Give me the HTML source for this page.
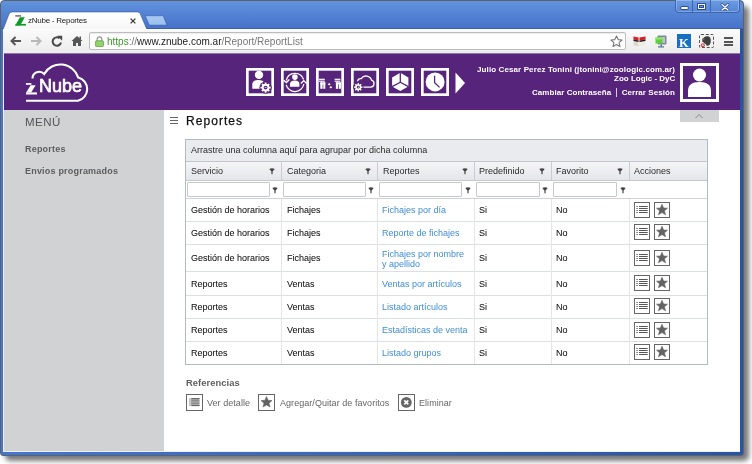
<!DOCTYPE html>
<html><head><meta charset="utf-8">
<style>
*{margin:0;padding:0;box-sizing:border-box}
html,body{width:752px;height:464px;overflow:hidden;background:#fff;font-family:"Liberation Sans",sans-serif;position:relative}
.a{position:absolute}
.t{position:absolute;white-space:nowrap;line-height:1;will-change:transform}
#shadow{left:5px;top:6px;width:744px;height:455px;background:rgba(0,0,0,.52);filter:blur(2.6px);border-radius:5px}
#win{left:0;top:0;width:744px;height:456px;background:linear-gradient(90deg,#4376d0,#3366c0 50%,#2654a9);border:1px solid #5f6168;border-radius:4px 4px 3px 3px}
#title{left:1px;top:1px;width:742px;height:28px;background:linear-gradient(#6193de,#4772c8);border-bottom:1px solid #3b62b2;border-radius:4px 4px 0 0}
#caps{left:675px;top:0px;width:65px;height:13px;border:1px solid #3e66b0;border-top:none;border-radius:0 0 4px 4px;background:linear-gradient(#6d9ce3,#5686d5);box-shadow:inset 0 0 0 1px rgba(255,255,255,.25)}
#toolbar{left:3px;top:29px;width:737px;height:25px;background:linear-gradient(#fbfbfb,#ececec);border-bottom:1px solid #e4e4e4}
#page{left:3px;top:54px;width:737px;height:398px;background:#fff;border-left:1px solid #f0f0f0;border-bottom:1px solid #f0f0f0;overflow:hidden}
#purple{left:4px;top:54px;width:736px;height:56px;background:#56247a;box-shadow:0 -1px 0 #8f77a6}
#side{left:4px;top:110px;width:160px;height:341px;background:#d1d2d4}
.hic{position:absolute;top:68px;width:28px;height:28px;border:2.5px solid #fff}
.grid{left:185px;top:139px;width:523px;height:226px;border:1px solid #b2b6bd;background:#fff}
.hd{font-size:9px;color:#2a2a2a}
.cell{font-size:9px;color:#111;-webkit-text-stroke:0.05px #111}
.lnk{font-size:9px;color:#3f8dd8}
.ico{position:absolute;width:17px;height:17px;border:1.5px solid #585858;background:#fff}
</style></head>
<body>
<div class="a" id="shadow"></div>
<div class="a" id="win"></div>
<div class="a" id="title"></div>
<div class="a" id="caps"></div>
<div class="a" style="left:692px;top:0;width:1px;height:12px;background:#3e66b0"></div>
<div class="a" style="left:710px;top:0;width:1px;height:12px;background:#3e66b0"></div>
<!-- caption glyphs -->
<div class="a" style="left:680px;top:6.3px;width:8.5px;height:3.3px;background:#fff;border:1px solid #2d4f8f;border-radius:2px"></div>
<div class="a" style="left:697px;top:3.3px;width:8.5px;height:6.3px;border:1px solid #2d4f8f;background:#f4f6fa"></div>
<div class="a" style="left:699px;top:5.3px;width:4.5px;height:2.3px;background:#6f95d8;border:0.8px solid #2d4f8f"></div>
<svg class="a" style="left:720px;top:2.5px" width="10" height="8.5" viewBox="0 0 10 8.5"><path d="M2 1.5 L8 7 M8 1.5 L2 7" stroke="#2d4f8f" stroke-width="2.8" stroke-linecap="round"/><path d="M2 1.5 L8 7 M8 1.5 L2 7" stroke="#fff" stroke-width="1.3" stroke-linecap="round"/></svg>
<!-- tab -->
<svg class="a" style="left:0;top:10px" width="175" height="20" viewBox="0 0 175 20">
  <defs><linearGradient id="tg" x1="0" y1="0" x2="0" y2="1"><stop offset="0" stop-color="#ffffff"/><stop offset="1" stop-color="#f7f7f7"/></linearGradient>
  <linearGradient id="ng" x1="0" y1="0" x2="0" y2="1"><stop offset="0" stop-color="#a9c9f2"/><stop offset="1" stop-color="#9abfef"/></linearGradient></defs>
  <path d="M3 19.5 L9 4 Q10 1.9 12.5 1.9 L137.5 1.9 Q139.5 1.9 140.3 3.8 L146.5 18.5 L147.5 19.5 Z" fill="url(#tg)" stroke="#3d5c99" stroke-width="0.7"/>
  <path d="M145.2 5.7 L162.5 5.7 Q163.2 5.7 163.5 6.5 L167 15.2 L150 15.2 Q149.3 15.2 149 14.5 Z" fill="#2f5cb0" opacity="0.6" transform="translate(0.5,0.8)"/>
  <path d="M145.2 5.7 L162.5 5.7 Q163.2 5.7 163.5 6.5 L167 15.2 L150 15.2 Q149.3 15.2 149 14.5 Z" fill="url(#ng)" stroke="#3f68b8" stroke-width="0.7"/>
</svg>
<!-- favicon -->
<svg class="a" style="left:15px;top:15px" width="12" height="12" viewBox="0 0 12 12"><rect x="0.3" y="0.1" width="5.7" height="1.6" fill="#777"/><path d="M4.9 2.2 L9.8 2.2 L5.2 10.6 L0.3 10.6 Z" fill="#119a2a"/><rect x="0.4" y="8.9" width="10.6" height="1.7" fill="#119a2a"/></svg>
<div class="t" style="left:28px;top:16.5px;font-size:8px;letter-spacing:-0.25px;color:#222">zNube - Reportes</div>
<svg class="a" style="left:130px;top:17.5px" width="6" height="6" viewBox="0 0 6 6"><path d="M0.6 0.6 L5.4 5.4 M5.4 0.6 L0.6 5.4" stroke="#3a3a3a" stroke-width="1.3"/></svg>

<div class="a" id="toolbar"></div>
<!-- nav icons -->
<svg class="a" style="left:10px;top:36px" width="12" height="10" viewBox="0 0 12 10"><path d="M11 5 L2 5 M5.5 1 L1.5 5 L5.5 9" stroke="#555" stroke-width="2" fill="none"/></svg>
<svg class="a" style="left:30px;top:36px" width="12" height="10" viewBox="0 0 12 10"><path d="M1 5 L10 5 M6.5 1 L10.5 5 L6.5 9" stroke="#b8b8b8" stroke-width="2" fill="none"/></svg>
<svg class="a" style="left:51px;top:35px" width="12" height="12" viewBox="0 0 12 12"><path d="M8.6 3.3 A4.2 4.2 0 1 0 10 7.5" stroke="#4a4a4a" stroke-width="2" fill="none"/><path d="M6.2 0.8 L11.2 0.8 L11.2 5.8 Z" fill="#4a4a4a"/></svg>
<svg class="a" style="left:71px;top:35px" width="12" height="12" viewBox="0 0 12 12"><path d="M6 1 L0.5 6 L2 6 L2 11 L5 11 L5 8 L7 8 L7 11 L10 11 L10 6 L11.5 6 Z" fill="#555"/><rect x="8.5" y="1.5" width="1.5" height="3" fill="#555"/></svg>
<!-- omnibox -->
<div class="a" style="left:89px;top:32px;width:537px;height:17.5px;border:1px solid #bdbdbd;border-radius:2px;background:#fff;box-shadow:inset 0 1px 1px rgba(0,0,0,.08)"></div>
<svg class="a" style="left:94.5px;top:35.5px" width="9" height="11" viewBox="0 0 9 11"><path d="M2.2 5 L2.2 3.2 A2.3 2.3 0 0 1 6.8 3.2 L6.8 5" stroke="#9a9a9a" stroke-width="1.3" fill="none"/><rect x="0.6" y="4.8" width="7.8" height="5.8" rx="0.8" fill="#92d46c" stroke="#5d9f3c" stroke-width="0.8"/></svg>
<div class="t" style="left:107px;top:37px;font-size:10px;color:#777"><span style="color:#3a9a2a">https</span>://<span style="color:#222">www.znube.com.ar</span>/Report/ReportList</div>
<svg class="a" style="left:610px;top:34.5px" width="13" height="13" viewBox="0 0 13 13"><path d="M6.5 1 L8.2 4.6 L12 5 L9.1 7.6 L10 11.6 L6.5 9.6 L3 11.6 L3.9 7.6 L1 5 L4.8 4.6 Z" fill="#fff" stroke="#7a7a7a" stroke-width="1.1" stroke-linejoin="round"/></svg>
<!-- extensions -->
<svg class="a" style="left:633px;top:35px" width="13" height="12" viewBox="0 0 13 12"><path d="M0.5 1.5 L5.5 2.5 L5.5 11.5 L0.5 10.5 Z" fill="#dcd8d2"/><path d="M5.5 2.5 L12.5 1.5 L12.5 10.5 L5.5 11.5 Z" fill="#eeebe6"/><path d="M0.5 1.5 L5.5 2.5 L5.5 5.5 L0.5 4.5 Z" fill="#d42027"/><path d="M0.5 4.5 L5.5 5.5 L5.5 7 L0.5 6 Z" fill="#222"/><path d="M6.5 2.4 L12.5 1.5 L12.5 4.5 L6.5 5.4 Z" fill="#d42027"/><path d="M6.5 5.4 L12.5 4.5 L12.5 6 L6.5 6.9 Z" fill="#222"/></svg>
<svg class="a" style="left:655px;top:34.5px" width="12" height="13" viewBox="0 0 12 13"><rect x="2.5" y="0.5" width="9" height="9" rx="1" fill="#7d8a95"/><rect x="4" y="2" width="6" height="6" fill="#b9c3cb"/><rect x="0.5" y="2.5" width="7" height="6" fill="#5fd03a"/><rect x="0.5" y="2.5" width="7" height="2" fill="#8fe86a"/><rect x="5.5" y="9.5" width="1.5" height="2" fill="#56708a"/><rect x="3" y="11.3" width="6" height="1.2" fill="#56708a"/></svg>
<div class="a" style="left:677px;top:34px;width:14px;height:14px;background:#1670bf"></div>
<div class="t" style="left:679.2px;top:35.8px;font:bold 12.5px 'Liberation Serif',serif;color:#fff">K</div>
<div class="a" style="left:698.5px;top:34px;width:15px;height:14px;border:1px dashed #555;border-radius:2px;background:#f2f2f2"></div>
<svg class="a" style="left:700px;top:35px" width="13" height="13" viewBox="0 0 13 13"><path d="M4 2.5 Q5 1 8 1.2 Q11 1.8 10.8 6 Q10.5 10.5 7.5 10.8 Q6 11 6.3 9.5 Q4.5 9 3.8 7.5 L2.2 6.8 L2.5 4 Z" fill="#3e3e3e"/><path d="M2.5 3.2 L4.3 3.2 L4.3 5 L2.5 5 Z" fill="#666"/><circle cx="2.8" cy="10.2" r="2" fill="#d63a3a"/><path d="M1.8 10.2 L3.8 10.2 M2.8 9.2 L2.8 11.2" stroke="#fff" stroke-width="0.7"/></svg>
<div class="a" style="left:724px;top:37px;width:9px;height:2px;background:#555"></div>
<div class="a" style="left:724px;top:40.5px;width:9px;height:2px;background:#555"></div>
<div class="a" style="left:724px;top:44px;width:9px;height:2px;background:#555"></div>

<div class="a" id="page"></div>
<div class="a" id="purple"></div>
<!-- logo -->
<svg class="a" style="left:22px;top:60px" width="72" height="46" viewBox="0 0 72 46">
  <path d="M4 40.7 L56 40.7 A11.9 11.9 0 0 0 56.3 17.6 A18.7 18.7 0 0 0 22.2 13.9 A6.8 6.8 0 0 0 10.5 18.6" stroke="#fff" stroke-width="2.1" fill="none"/>
  <rect x="3.9" y="23.1" width="5.5" height="1.7" fill="#fff"/>
  <path d="M8.6 25.2 L13.6 25.2 L9.2 32.5 L4.2 32.5 Z" fill="#fff"/>
  <rect x="4" y="32.4" width="11" height="2.1" fill="#fff"/>
</svg>
<div class="t" style="left:39.3px;top:77px;font-size:18px;color:#fff;letter-spacing:0px;-webkit-text-stroke:0.7px #fff">Nube</div>
<!-- header icons -->
<svg class="a" style="left:246px;top:68px" width="28" height="28" viewBox="0 0 28 28"><rect x="1.35" y="1.35" width="25.3" height="25.3" fill="none" stroke="#fff" stroke-width="2.7"/><circle cx="13" cy="6.9" r="4.2" fill="#fff"/><path d="M6.3 20.8 L6.3 16.5 Q6.3 12.1 12.5 12.1 Q18.1 12.1 18.6 16.5 L18.6 20.8 Z" fill="#fff"/><circle cx="19.6" cy="19.6" r="6.2" fill="#56247a"/><circle cx="19.6" cy="19.6" r="3.9" fill="#fff"/><rect x="18.75" y="14.500000000000002" width="1.7" height="5.1" fill="#fff" transform="rotate(0.0 19.6 19.6)"/><rect x="18.75" y="14.500000000000002" width="1.7" height="5.1" fill="#fff" transform="rotate(45.0 19.6 19.6)"/><rect x="18.75" y="14.500000000000002" width="1.7" height="5.1" fill="#fff" transform="rotate(90.0 19.6 19.6)"/><rect x="18.75" y="14.500000000000002" width="1.7" height="5.1" fill="#fff" transform="rotate(135.0 19.6 19.6)"/><rect x="18.75" y="14.500000000000002" width="1.7" height="5.1" fill="#fff" transform="rotate(180.0 19.6 19.6)"/><rect x="18.75" y="14.500000000000002" width="1.7" height="5.1" fill="#fff" transform="rotate(225.0 19.6 19.6)"/><rect x="18.75" y="14.500000000000002" width="1.7" height="5.1" fill="#fff" transform="rotate(270.0 19.6 19.6)"/><rect x="18.75" y="14.500000000000002" width="1.7" height="5.1" fill="#fff" transform="rotate(315.0 19.6 19.6)"/><circle cx="19.6" cy="19.6" r="1.9" fill="#56247a"/><rect x="18.7" y="19.3" width="1.8" height="0.7" fill="#fff"/></svg>
<svg class="a" style="left:281px;top:68px" width="28" height="28" viewBox="0 0 28 28"><rect x="1.35" y="1.35" width="25.3" height="25.3" fill="none" stroke="#fff" stroke-width="2.7"/><circle cx="13.9" cy="9.1" r="2.8" fill="#fff"/><path d="M9 18.7 L9 16 Q9 12.4 13.9 12.4 Q18.4 12.4 18.4 16 L18.4 18.7 Z" fill="#fff"/><path d="M5.3 12.3 A9 9 0 0 1 22.6 11.5" stroke="#fff" stroke-width="1.3" fill="none"/><path d="M22.8 16 A9 9 0 0 1 5.2 16.8" stroke="#fff" stroke-width="1.3" fill="none"/><path d="M2.6 12.2 L5.4 14.6 L8.4 11.6" stroke="#fff" stroke-width="1.4" fill="none"/><path d="M19.8 15.6 L22.8 12.8 L25.6 15.4" stroke="#fff" stroke-width="1.4" fill="none"/></svg>
<svg class="a" style="left:316px;top:68px" width="28" height="28" viewBox="0 0 28 28"><rect x="1.35" y="1.35" width="25.3" height="25.3" fill="none" stroke="#fff" stroke-width="2.7"/><rect x="3" y="10.7" width="5.8" height="1.2" fill="#fff"/><rect x="3" y="12.6" width="5.8" height="1.2" fill="#fff"/><rect x="4.3" y="14.4" width="2.3" height="6.4" fill="#fff"/><rect x="4.3" y="14.4" width="5" height="2" fill="#fff"/><rect x="7.3" y="14.4" width="2" height="6.4" fill="#fff"/><rect x="18.6" y="10.7" width="5.8" height="1.2" fill="#fff"/><rect x="18.6" y="12.6" width="5.8" height="1.2" fill="#fff"/><rect x="19.9" y="14.4" width="2.3" height="6.4" fill="#fff"/><rect x="19.9" y="14.4" width="5" height="2" fill="#fff"/><rect x="22.9" y="14.4" width="2" height="6.4" fill="#fff"/><path d="M11.8 16.3 L13.2 15.1 L14.6 16.3 L13.2 17.5 Z" fill="#fff"/><path d="M13.4 19.3 L14.8 18.1 L16.2 19.3 L14.8 20.5 Z" fill="#fff"/></svg>
<svg class="a" style="left:351px;top:68px" width="28" height="28" viewBox="0 0 28 28"><rect x="1.35" y="1.35" width="25.3" height="25.3" fill="none" stroke="#fff" stroke-width="2.7"/><path d="M10.5 19.2 L19.6 19.2 A3.6 3.6 0 0 0 20.6 12.2 A5.8 5.8 0 0 0 10.2 10.6 A3 3 0 0 0 6.6 13.2" stroke="#fff" stroke-width="1.3" fill="none"/><circle cx="7.3" cy="19.2" r="5.2" fill="#56247a"/><circle cx="7.3" cy="19.2" r="3.0" fill="#fff"/><rect x="6.6" y="15.0" width="1.4" height="4.2" fill="#fff" transform="rotate(0.0 7.3 19.2)"/><rect x="6.6" y="15.0" width="1.4" height="4.2" fill="#fff" transform="rotate(45.0 7.3 19.2)"/><rect x="6.6" y="15.0" width="1.4" height="4.2" fill="#fff" transform="rotate(90.0 7.3 19.2)"/><rect x="6.6" y="15.0" width="1.4" height="4.2" fill="#fff" transform="rotate(135.0 7.3 19.2)"/><rect x="6.6" y="15.0" width="1.4" height="4.2" fill="#fff" transform="rotate(180.0 7.3 19.2)"/><rect x="6.6" y="15.0" width="1.4" height="4.2" fill="#fff" transform="rotate(225.0 7.3 19.2)"/><rect x="6.6" y="15.0" width="1.4" height="4.2" fill="#fff" transform="rotate(270.0 7.3 19.2)"/><rect x="6.6" y="15.0" width="1.4" height="4.2" fill="#fff" transform="rotate(315.0 7.3 19.2)"/><circle cx="7.3" cy="19.2" r="1.4" fill="#56247a"/><circle cx="7.3" cy="19.2" r="0.5" fill="#fff"/></svg>
<svg class="a" style="left:386px;top:68px" width="28" height="28" viewBox="0 0 28 28"><rect x="1.35" y="1.35" width="25.3" height="25.3" fill="none" stroke="#fff" stroke-width="2.7"/><path d="M14.3 4.8 L22.4 9.5 L22.4 18.5 L14.3 22.9 L6.1 18.5 L6.1 9.5 Z" fill="#fff"/><path d="M14.3 4.8 L14.3 14.2 M14.3 14.2 L6.1 18.6 M14.3 14.2 L22.4 18.6" stroke="#56247a" stroke-width="1.3" fill="none"/></svg>
<svg class="a" style="left:421px;top:68px" width="28" height="28" viewBox="0 0 28 28"><rect x="1.35" y="1.35" width="25.3" height="25.3" fill="none" stroke="#fff" stroke-width="2.7"/><circle cx="14.1" cy="13.9" r="9.5" fill="#fff"/><path d="M13.6 7.8 L13.6 14.6 L18.6 19.4" stroke="#56247a" stroke-width="1.3" fill="none"/></svg>
<svg class="a" style="left:455px;top:72px" width="11" height="22" viewBox="0 0 11 22"><path d="M0.5 0.5 L10 11 L0.5 21.5 Z" fill="#fff"/></svg>
<!-- user -->
<div class="t" style="right:77px;top:66px;font-size:8px;font-weight:bold;color:#fff;text-align:right;letter-spacing:0.11px">Julio Cesar Perez Tonini (jtonini@zoologic.com.ar)</div>
<div class="t" style="right:77px;top:74.5px;font-size:8px;font-weight:bold;color:#fff;text-align:right">Zoo Logic - DyC</div>
<div class="t" style="right:77px;top:87.5px;font-size:8px;font-weight:bold;color:#fff;text-align:right;letter-spacing:0.05px">Cambiar Contraseña <span style="display:inline-block;width:1px;height:8.5px;background:#d8cce2;vertical-align:-1.5px;margin:0 2.5px"></span> Cerrar Sesión</div>
<div class="a" style="left:680px;top:63px;width:39px;height:39px;border:3.5px solid #fff"></div>
<svg class="a" style="left:680px;top:63px" width="39" height="39" viewBox="0 0 39 39"><circle cx="19.5" cy="12" r="6.5" fill="#fff"/><path d="M8 34 L8 28 Q8 19 19.5 19 Q31 19 31 28 L31 34 Z" fill="#fff"/></svg>
<!-- collapse tab -->
<div class="a" style="left:680px;top:110px;width:39px;height:12px;background:#d1d2d4"></div>
<svg class="a" style="left:694px;top:113px" width="10" height="6" viewBox="0 0 10 6"><path d="M1.5 5 L5 1.5 L8.5 5" stroke="#888" stroke-width="1" fill="none"/></svg>

<!-- sidebar -->
<div class="a" id="side"></div>
<div class="t" style="left:25px;top:117px;font-size:11.5px;color:#555;letter-spacing:0.45px">MENÚ</div>
<div class="t" style="left:25px;top:144.6px;font-size:9px;font-weight:bold;color:#5e5e5e;letter-spacing:0.2px">Reportes</div>
<div class="t" style="left:25px;top:166.8px;font-size:9px;font-weight:bold;color:#5e5e5e;letter-spacing:0.2px">Envios programados</div>

<!-- content title -->
<div class="a" style="left:170px;top:117px;width:8px;height:1.3px;background:#666"></div>
<div class="a" style="left:170px;top:120px;width:8px;height:1.3px;background:#666"></div>
<div class="a" style="left:170px;top:123px;width:8px;height:1.3px;background:#666"></div>
<div class="t" style="left:185.5px;top:114.5px;font-size:12px;color:#111;letter-spacing:1.05px;-webkit-text-stroke:0.25px #111">Reportes</div>

<!-- grid -->
<div class="a" style="left:185px;top:139px;width:523px;height:226px;border:1px solid #b5b9c0;background:#fff"></div>
<div class="a" style="left:186px;top:140px;width:521px;height:22px;background:#e9ebef;border-bottom:1px solid #c3c7cd"></div>
<div class="t hd" style="left:191px;top:146px">Arrastre una columna aquí para agrupar por dicha columna</div>
<div class="a" style="left:186px;top:162px;width:521px;height:19px;background:linear-gradient(#f5f5f7,#e4e6ea);border-bottom:1px solid #c5c9cf"></div>
<div class="t hd" style="left:191px;top:166.5px">Servicio</div>
<svg class="a" style="left:269px;top:168px" width="6" height="7" viewBox="0 0 6 7"><path d="M0.6 0.8 Q3 -0.2 5.4 0.8 L5.4 1.6 L3.6 3.4 L3.6 6.3 L2.4 6.3 L2.4 3.4 L0.6 1.6 Z" fill="#444"/></svg>
<div class="a" style="left:281px;top:162px;width:1px;height:19px;background:#c8ccd2"></div>
<div class="t hd" style="left:287px;top:166.5px">Categoria</div>
<svg class="a" style="left:365px;top:168px" width="6" height="7" viewBox="0 0 6 7"><path d="M0.6 0.8 Q3 -0.2 5.4 0.8 L5.4 1.6 L3.6 3.4 L3.6 6.3 L2.4 6.3 L2.4 3.4 L0.6 1.6 Z" fill="#444"/></svg>
<div class="a" style="left:377px;top:162px;width:1px;height:19px;background:#c8ccd2"></div>
<div class="t hd" style="left:383px;top:166.5px">Reportes</div>
<svg class="a" style="left:462px;top:168px" width="6" height="7" viewBox="0 0 6 7"><path d="M0.6 0.8 Q3 -0.2 5.4 0.8 L5.4 1.6 L3.6 3.4 L3.6 6.3 L2.4 6.3 L2.4 3.4 L0.6 1.6 Z" fill="#444"/></svg>
<div class="a" style="left:474px;top:162px;width:1px;height:19px;background:#c8ccd2"></div>
<div class="t hd" style="left:479px;top:166.5px">Predefinido</div>
<svg class="a" style="left:539px;top:168px" width="6" height="7" viewBox="0 0 6 7"><path d="M0.6 0.8 Q3 -0.2 5.4 0.8 L5.4 1.6 L3.6 3.4 L3.6 6.3 L2.4 6.3 L2.4 3.4 L0.6 1.6 Z" fill="#444"/></svg>
<div class="a" style="left:551px;top:162px;width:1px;height:19px;background:#c8ccd2"></div>
<div class="t hd" style="left:556px;top:166.5px">Favorito</div>
<svg class="a" style="left:617px;top:168px" width="6" height="7" viewBox="0 0 6 7"><path d="M0.6 0.8 Q3 -0.2 5.4 0.8 L5.4 1.6 L3.6 3.4 L3.6 6.3 L2.4 6.3 L2.4 3.4 L0.6 1.6 Z" fill="#444"/></svg>
<div class="a" style="left:629px;top:162px;width:1px;height:19px;background:#c8ccd2"></div>
<div class="t hd" style="left:634px;top:166.5px">Acciones</div>
<div class="a" style="left:187px;top:182px;width:82.5px;height:15px;border:1px solid #c5c8cd;border-radius:1px;background:#fff"></div>
<svg class="a" style="left:272px;top:187px" width="6" height="7" viewBox="0 0 6 7"><path d="M0.6 0.8 Q3 -0.2 5.4 0.8 L5.4 1.6 L3.6 3.4 L3.6 6.3 L2.4 6.3 L2.4 3.4 L0.6 1.6 Z" fill="#444"/></svg>
<div class="a" style="left:283px;top:182px;width:82.5px;height:15px;border:1px solid #c5c8cd;border-radius:1px;background:#fff"></div>
<svg class="a" style="left:368px;top:187px" width="6" height="7" viewBox="0 0 6 7"><path d="M0.6 0.8 Q3 -0.2 5.4 0.8 L5.4 1.6 L3.6 3.4 L3.6 6.3 L2.4 6.3 L2.4 3.4 L0.6 1.6 Z" fill="#444"/></svg>
<div class="a" style="left:379px;top:182px;width:82.5px;height:15px;border:1px solid #c5c8cd;border-radius:1px;background:#fff"></div>
<svg class="a" style="left:465px;top:187px" width="6" height="7" viewBox="0 0 6 7"><path d="M0.6 0.8 Q3 -0.2 5.4 0.8 L5.4 1.6 L3.6 3.4 L3.6 6.3 L2.4 6.3 L2.4 3.4 L0.6 1.6 Z" fill="#444"/></svg>
<div class="a" style="left:476px;top:182px;width:64px;height:15px;border:1px solid #c5c8cd;border-radius:1px;background:#fff"></div>
<svg class="a" style="left:542px;top:187px" width="6" height="7" viewBox="0 0 6 7"><path d="M0.6 0.8 Q3 -0.2 5.4 0.8 L5.4 1.6 L3.6 3.4 L3.6 6.3 L2.4 6.3 L2.4 3.4 L0.6 1.6 Z" fill="#444"/></svg>
<div class="a" style="left:553px;top:182px;width:64px;height:15px;border:1px solid #c5c8cd;border-radius:1px;background:#fff"></div>
<svg class="a" style="left:620px;top:187px" width="6" height="7" viewBox="0 0 6 7"><path d="M0.6 0.8 Q3 -0.2 5.4 0.8 L5.4 1.6 L3.6 3.4 L3.6 6.3 L2.4 6.3 L2.4 3.4 L0.6 1.6 Z" fill="#444"/></svg>
<div class="a" style="left:186px;top:198px;width:521px;height:1px;background:#dcdfe3"></div>
<div class="a" style="left:186px;top:221px;width:521px;height:1px;background:#dcdfe3"></div>
<div class="a" style="left:186px;top:244px;width:521px;height:1px;background:#dcdfe3"></div>
<div class="a" style="left:186px;top:271px;width:521px;height:1px;background:#dcdfe3"></div>
<div class="a" style="left:186px;top:295px;width:521px;height:1px;background:#dcdfe3"></div>
<div class="a" style="left:186px;top:318px;width:521px;height:1px;background:#dcdfe3"></div>
<div class="a" style="left:186px;top:341px;width:521px;height:1px;background:#dcdfe3"></div>
<div class="a" style="left:186px;top:198px;width:521px;height:1px;background:#cfd2d7"></div>
<div class="a" style="left:281px;top:199px;width:1px;height:165px;background:#e3e5e8"></div>
<div class="a" style="left:377px;top:199px;width:1px;height:165px;background:#e3e5e8"></div>
<div class="a" style="left:474px;top:199px;width:1px;height:165px;background:#e3e5e8"></div>
<div class="a" style="left:551px;top:199px;width:1px;height:165px;background:#e3e5e8"></div>
<div class="a" style="left:629px;top:199px;width:1px;height:165px;background:#e3e5e8"></div>
<div class="t cell" style="left:191px;top:206.18px">Gestión de horarios</div>
<div class="t cell" style="left:286.5px;top:206.18px">Fichajes</div>
<div class="t lnk" style="left:382px;top:206.18px">Fichajes por día</div>
<div class="t cell" style="left:479px;top:206.18px">Si</div>
<div class="t cell" style="left:556px;top:206.18px">No</div>
<div class="a" style="left:634px;top:202px;width:16px;height:16px;border:1.4px solid #666;background:#fff"></div><svg class="a" style="left:634px;top:202px" width="16" height="16" viewBox="0 0 16 16"><rect x="2.3" y="4" width="1.6" height="1" fill="#777"/><rect x="5" y="4" width="8.7" height="1" fill="#555"/><rect x="2.3" y="6" width="1.6" height="1" fill="#777"/><rect x="5" y="6" width="8.7" height="1" fill="#555"/><rect x="2.3" y="8" width="1.6" height="1" fill="#777"/><rect x="5" y="8" width="8.7" height="1" fill="#555"/><rect x="2.3" y="10" width="1.6" height="1" fill="#777"/><rect x="5" y="10" width="8.7" height="1" fill="#555"/></svg>
<div class="a" style="left:654px;top:202px;width:16px;height:16px;border:1.4px solid #666;background:#fff"></div><svg class="a" style="left:654px;top:202px" width="16" height="16" viewBox="0 0 16 16"><path d="M8 2.2 L9.6 6 L13.5 6.2 L10.5 8.8 L11.5 12.8 L8 10.6 L4.5 12.8 L5.5 8.8 L2.5 6.2 L6.4 6 Z" fill="#636363" stroke="#636363" stroke-width="0.6" stroke-linejoin="round"/></svg>
<div class="t cell" style="left:191px;top:229.18px">Gestión de horarios</div>
<div class="t cell" style="left:286.5px;top:229.18px">Fichajes</div>
<div class="t lnk" style="left:382px;top:229.18px">Reporte de fichajes</div>
<div class="t cell" style="left:479px;top:229.18px">Si</div>
<div class="t cell" style="left:556px;top:229.18px">No</div>
<div class="a" style="left:634px;top:224px;width:16px;height:16px;border:1.4px solid #666;background:#fff"></div><svg class="a" style="left:634px;top:224px" width="16" height="16" viewBox="0 0 16 16"><rect x="2.3" y="4" width="1.6" height="1" fill="#777"/><rect x="5" y="4" width="8.7" height="1" fill="#555"/><rect x="2.3" y="6" width="1.6" height="1" fill="#777"/><rect x="5" y="6" width="8.7" height="1" fill="#555"/><rect x="2.3" y="8" width="1.6" height="1" fill="#777"/><rect x="5" y="8" width="8.7" height="1" fill="#555"/><rect x="2.3" y="10" width="1.6" height="1" fill="#777"/><rect x="5" y="10" width="8.7" height="1" fill="#555"/></svg>
<div class="a" style="left:654px;top:224px;width:16px;height:16px;border:1.4px solid #666;background:#fff"></div><svg class="a" style="left:654px;top:224px" width="16" height="16" viewBox="0 0 16 16"><path d="M8 2.2 L9.6 6 L13.5 6.2 L10.5 8.8 L11.5 12.8 L8 10.6 L4.5 12.8 L5.5 8.8 L2.5 6.2 L6.4 6 Z" fill="#636363" stroke="#636363" stroke-width="0.6" stroke-linejoin="round"/></svg>
<div class="t cell" style="left:191px;top:254.18px">Gestión de horarios</div>
<div class="t cell" style="left:286.5px;top:254.18px">Fichajes</div>
<div class="t lnk" style="left:382px;top:250.48px;line-height:9.8px;margin-top:-0.5px">Fichajes por nombre<br>y apellido</div>
<div class="t cell" style="left:479px;top:254.18px">Si</div>
<div class="t cell" style="left:556px;top:254.18px">No</div>
<div class="a" style="left:634px;top:250px;width:16px;height:16px;border:1.4px solid #666;background:#fff"></div><svg class="a" style="left:634px;top:250px" width="16" height="16" viewBox="0 0 16 16"><rect x="2.3" y="4" width="1.6" height="1" fill="#777"/><rect x="5" y="4" width="8.7" height="1" fill="#555"/><rect x="2.3" y="6" width="1.6" height="1" fill="#777"/><rect x="5" y="6" width="8.7" height="1" fill="#555"/><rect x="2.3" y="8" width="1.6" height="1" fill="#777"/><rect x="5" y="8" width="8.7" height="1" fill="#555"/><rect x="2.3" y="10" width="1.6" height="1" fill="#777"/><rect x="5" y="10" width="8.7" height="1" fill="#555"/></svg>
<div class="a" style="left:654px;top:250px;width:16px;height:16px;border:1.4px solid #666;background:#fff"></div><svg class="a" style="left:654px;top:250px" width="16" height="16" viewBox="0 0 16 16"><path d="M8 2.2 L9.6 6 L13.5 6.2 L10.5 8.8 L11.5 12.8 L8 10.6 L4.5 12.8 L5.5 8.8 L2.5 6.2 L6.4 6 Z" fill="#636363" stroke="#636363" stroke-width="0.6" stroke-linejoin="round"/></svg>
<div class="t cell" style="left:191px;top:279.68px">Reportes</div>
<div class="t cell" style="left:286.5px;top:279.68px">Ventas</div>
<div class="t lnk" style="left:382px;top:279.68px">Ventas por artículos</div>
<div class="t cell" style="left:479px;top:279.68px">Si</div>
<div class="t cell" style="left:556px;top:279.68px">No</div>
<div class="a" style="left:634px;top:275px;width:16px;height:16px;border:1.4px solid #666;background:#fff"></div><svg class="a" style="left:634px;top:275px" width="16" height="16" viewBox="0 0 16 16"><rect x="2.3" y="4" width="1.6" height="1" fill="#777"/><rect x="5" y="4" width="8.7" height="1" fill="#555"/><rect x="2.3" y="6" width="1.6" height="1" fill="#777"/><rect x="5" y="6" width="8.7" height="1" fill="#555"/><rect x="2.3" y="8" width="1.6" height="1" fill="#777"/><rect x="5" y="8" width="8.7" height="1" fill="#555"/><rect x="2.3" y="10" width="1.6" height="1" fill="#777"/><rect x="5" y="10" width="8.7" height="1" fill="#555"/></svg>
<div class="a" style="left:654px;top:275px;width:16px;height:16px;border:1.4px solid #666;background:#fff"></div><svg class="a" style="left:654px;top:275px" width="16" height="16" viewBox="0 0 16 16"><path d="M8 2.2 L9.6 6 L13.5 6.2 L10.5 8.8 L11.5 12.8 L8 10.6 L4.5 12.8 L5.5 8.8 L2.5 6.2 L6.4 6 Z" fill="#636363" stroke="#636363" stroke-width="0.6" stroke-linejoin="round"/></svg>
<div class="t cell" style="left:191px;top:303.18px">Reportes</div>
<div class="t cell" style="left:286.5px;top:303.18px">Ventas</div>
<div class="t lnk" style="left:382px;top:303.18px">Listado artículos</div>
<div class="t cell" style="left:479px;top:303.18px">Si</div>
<div class="t cell" style="left:556px;top:303.18px">No</div>
<div class="a" style="left:634px;top:298px;width:16px;height:16px;border:1.4px solid #666;background:#fff"></div><svg class="a" style="left:634px;top:298px" width="16" height="16" viewBox="0 0 16 16"><rect x="2.3" y="4" width="1.6" height="1" fill="#777"/><rect x="5" y="4" width="8.7" height="1" fill="#555"/><rect x="2.3" y="6" width="1.6" height="1" fill="#777"/><rect x="5" y="6" width="8.7" height="1" fill="#555"/><rect x="2.3" y="8" width="1.6" height="1" fill="#777"/><rect x="5" y="8" width="8.7" height="1" fill="#555"/><rect x="2.3" y="10" width="1.6" height="1" fill="#777"/><rect x="5" y="10" width="8.7" height="1" fill="#555"/></svg>
<div class="a" style="left:654px;top:298px;width:16px;height:16px;border:1.4px solid #666;background:#fff"></div><svg class="a" style="left:654px;top:298px" width="16" height="16" viewBox="0 0 16 16"><path d="M8 2.2 L9.6 6 L13.5 6.2 L10.5 8.8 L11.5 12.8 L8 10.6 L4.5 12.8 L5.5 8.8 L2.5 6.2 L6.4 6 Z" fill="#636363" stroke="#636363" stroke-width="0.6" stroke-linejoin="round"/></svg>
<div class="t cell" style="left:191px;top:326.18px">Reportes</div>
<div class="t cell" style="left:286.5px;top:326.18px">Ventas</div>
<div class="t lnk" style="left:382px;top:326.18px">Estadísticas de venta</div>
<div class="t cell" style="left:479px;top:326.18px">Si</div>
<div class="t cell" style="left:556px;top:326.18px">No</div>
<div class="a" style="left:634px;top:322px;width:16px;height:16px;border:1.4px solid #666;background:#fff"></div><svg class="a" style="left:634px;top:322px" width="16" height="16" viewBox="0 0 16 16"><rect x="2.3" y="4" width="1.6" height="1" fill="#777"/><rect x="5" y="4" width="8.7" height="1" fill="#555"/><rect x="2.3" y="6" width="1.6" height="1" fill="#777"/><rect x="5" y="6" width="8.7" height="1" fill="#555"/><rect x="2.3" y="8" width="1.6" height="1" fill="#777"/><rect x="5" y="8" width="8.7" height="1" fill="#555"/><rect x="2.3" y="10" width="1.6" height="1" fill="#777"/><rect x="5" y="10" width="8.7" height="1" fill="#555"/></svg>
<div class="a" style="left:654px;top:322px;width:16px;height:16px;border:1.4px solid #666;background:#fff"></div><svg class="a" style="left:654px;top:322px" width="16" height="16" viewBox="0 0 16 16"><path d="M8 2.2 L9.6 6 L13.5 6.2 L10.5 8.8 L11.5 12.8 L8 10.6 L4.5 12.8 L5.5 8.8 L2.5 6.2 L6.4 6 Z" fill="#636363" stroke="#636363" stroke-width="0.6" stroke-linejoin="round"/></svg>
<div class="t cell" style="left:191px;top:349.18px">Reportes</div>
<div class="t cell" style="left:286.5px;top:349.18px">Ventas</div>
<div class="t lnk" style="left:382px;top:349.18px">Listado grupos</div>
<div class="t cell" style="left:479px;top:349.18px">Si</div>
<div class="t cell" style="left:556px;top:349.18px">No</div>
<div class="a" style="left:634px;top:344px;width:16px;height:16px;border:1.4px solid #666;background:#fff"></div><svg class="a" style="left:634px;top:344px" width="16" height="16" viewBox="0 0 16 16"><rect x="2.3" y="4" width="1.6" height="1" fill="#777"/><rect x="5" y="4" width="8.7" height="1" fill="#555"/><rect x="2.3" y="6" width="1.6" height="1" fill="#777"/><rect x="5" y="6" width="8.7" height="1" fill="#555"/><rect x="2.3" y="8" width="1.6" height="1" fill="#777"/><rect x="5" y="8" width="8.7" height="1" fill="#555"/><rect x="2.3" y="10" width="1.6" height="1" fill="#777"/><rect x="5" y="10" width="8.7" height="1" fill="#555"/></svg>
<div class="a" style="left:654px;top:344px;width:16px;height:16px;border:1.4px solid #666;background:#fff"></div><svg class="a" style="left:654px;top:344px" width="16" height="16" viewBox="0 0 16 16"><path d="M8 2.2 L9.6 6 L13.5 6.2 L10.5 8.8 L11.5 12.8 L8 10.6 L4.5 12.8 L5.5 8.8 L2.5 6.2 L6.4 6 Z" fill="#636363" stroke="#636363" stroke-width="0.6" stroke-linejoin="round"/></svg>
<div class="t" style="left:185.5px;top:378px;font-size:9.4px;font-weight:bold;color:#606060;letter-spacing:0.05px">Referencias</div>
<div class="a" style="left:185.5px;top:393.8px;width:17px;height:17px;border:1.5px solid #666;background:#fff"></div>
<svg class="a" style="left:185.5px;top:393.8px" width="17" height="17" viewBox="0 0 17 17"><rect x="3" y="4.3" width="10.5" height="7.6" fill="#a9a9a9"/><rect x="3" y="4.3" width="2" height="7.6" fill="#c8c8c8"/><rect x="5.5" y="4.2" width="8" height="0.9" fill="#555"/><rect x="5.5" y="11.2" width="8" height="0.9" fill="#555"/><rect x="5.5" y="6.5" width="8" height="0.7" fill="#777"/><rect x="5.5" y="8.8" width="8" height="0.7" fill="#777"/></svg>
<div class="t" style="left:207px;top:399.2px;font-size:9px;color:#666;letter-spacing:0.05px">Ver detalle</div>
<div class="a" style="left:258px;top:393.8px;width:17px;height:17px;border:1.5px solid #666;background:#fff"></div>
<svg class="a" style="left:258px;top:393.8px" width="17" height="17" viewBox="0 0 17 17"><path d="M8.5 2.6 L10.1 6.3 L14 6.6 L11 9.2 L12 13 L8.5 10.9 L5 13 L6 9.2 L3 6.6 L6.9 6.3 Z" fill="#646464" stroke="#646464" stroke-width="0.6" stroke-linejoin="round"/></svg>
<div class="t" style="left:279.5px;top:399.2px;font-size:9px;color:#666;letter-spacing:0.05px">Agregar/Quitar de favoritos</div>
<div class="a" style="left:398px;top:393.8px;width:17px;height:17px;border:1.5px solid #666;background:#fff"></div>
<svg class="a" style="left:398px;top:393.8px" width="17" height="17" viewBox="0 0 17 17"><circle cx="8.3" cy="8.4" r="5.4" fill="#666"/><path d="M6.3 6.4 L10.3 10.4 M10.3 6.4 L6.3 10.4" stroke="#fff" stroke-width="1.6"/></svg>
<div class="t" style="left:419px;top:399.2px;font-size:9px;color:#666;letter-spacing:0.05px">Eliminar</div>
</body></html>
